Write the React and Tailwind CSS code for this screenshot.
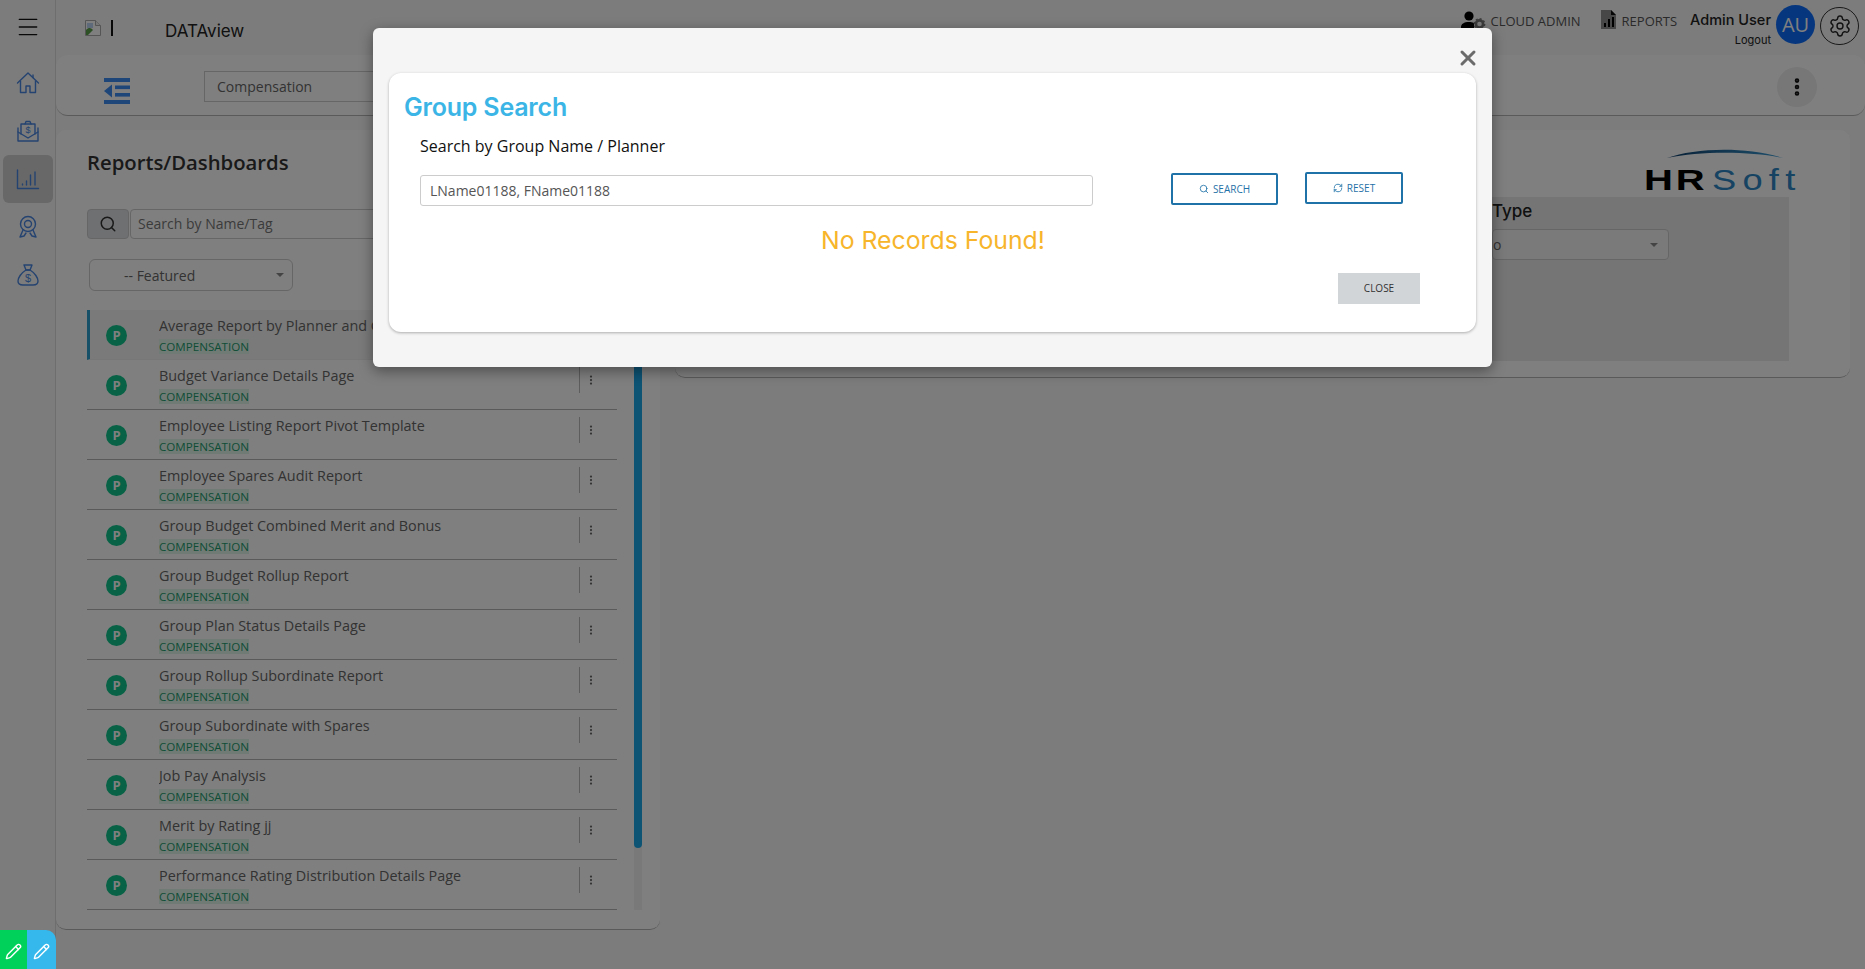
import React from 'react';
import { Search, RefreshCw, X, Menu, EllipsisVertical, Pencil, Settings } from 'lucide-react';

const reports = [
  'Average Report by Planner and Group',
  'Budget Variance Details Page',
  'Employee Listing Report Pivot Template',
  'Employee Spares Audit Report',
  'Group Budget Combined Merit and Bonus',
  'Group Budget Rollup Report',
  'Group Plan Status Details Page',
  'Group Rollup Subordinate Report',
  'Group Subordinate with Spares',
  'Job Pay Analysis',
  'Merit by Rating jj',
  'Performance Rating Distribution Details Page',
];

const iconProps = { width: 24, height: 24, viewBox: '0 0 24 24', fill: 'none', stroke: '#4a86e0', strokeWidth: 1.4, strokeLinejoin: 'round', strokeLinecap: 'round' };

function HomeIcon() {
  return (
    <svg {...iconProps}>
      <path d="M1.5 12 12 2l10.5 10" />
      <path d="M4.5 10v11.5h5.5V15h4v6.5h5.5V10" />
      <path d="M17 4v2.5" />
    </svg>
  );
}

function EnvelopeIcon() {
  return (
    <svg {...iconProps}>
      <path d="M2 9v13h20V9" />
      <path d="M2 13l10 6 10-6" />
      <path d="M5 15V5h14v10" />
      <path d="M9 5 10 2.5h4L15 5" />
      <text x="12" y="14" fontSize="9" textAnchor="middle" fill="#4a86e0" stroke="none" fontFamily="Liberation Sans, sans-serif">$</text>
    </svg>
  );
}

function ChartIcon() {
  return (
    <svg {...iconProps}>
      <path d="M1.5 3v18.5h21" />
      <path d="M6.5 17v1" />
      <path d="M10.5 14v4" strokeDasharray="1.5 1" />
      <path d="M14.5 8v10" />
      <path d="M19 5v13" />
    </svg>
  );
}

function RibbonIcon() {
  return (
    <svg {...iconProps}>
      <circle cx="12" cy="9" r="7.5" />
      <circle cx="12" cy="9" r="3.5" />
      <path d="M7 15 4 22l4-1 2-3" />
      <path d="M17 15l3 7-4-1-2-3" />
    </svg>
  );
}

function BagIcon() {
  return (
    <svg {...iconProps}>
      <path d="M8 2h8l-2 5h-4z" />
      <path d="M10 7h4c5 3 8 8 8 11 0 3-2 4-5 4H7c-3 0-5-1-5-4 0-3 3-8 8-11z" />
      <text x="12" y="19" fontSize="11" textAnchor="middle" fill="#4a86e0" stroke="none" fontFamily="Liberation Sans, sans-serif">$</text>
    </svg>
  );
}

function OutdentIcon() {
  return (
    <svg width="26" height="26" viewBox="0 0 26 26" fill="#3f8cf0">
      <rect x="0" y="0" width="26" height="4" />
      <rect x="0" y="22" width="26" height="4" />
      <rect x="11" y="7.5" width="15" height="3.6" />
      <rect x="11" y="15" width="15" height="3.6" />
      <path d="M8 6.5v13L0 13z" />
    </svg>
  );
}

function BrokenImage() {
  return (
    <svg width="16" height="16" viewBox="0 0 16 16">
      <path d="M.5.5h10l5 5v10H.5z" fill="#fff" stroke="#aaa" />
      <path d="M10.5.5v5h5" fill="#eee" stroke="#aaa" />
      <path d="M1 15V10c3-3 5-2 7 0l-5 5z" fill="#5aa04a" />
      <path d="M2 3h6v5H2z" fill="#bcd4f4" />
    </svg>
  );
}

function UserCog() {
  return (
    <svg width="25" height="20" viewBox="0 0 25 20">
      <circle cx="8" cy="5" r="4.6" fill="#000" />
      <path d="M0 20v-4c0-3 3-5 8-5 2 0 3 .3 5 1v8z" fill="#000" />
      <circle cx="18.5" cy="13" r="3.6" fill="none" stroke="#777" strokeWidth="2.6" />
      <circle cx="18.5" cy="13" r="5.2" fill="none" stroke="#777" strokeWidth="1.4" strokeDasharray="2 2" />
    </svg>
  );
}

function ReportDoc() {
  return (
    <svg width="15" height="19" viewBox="0 0 15 19">
      <path d="M0 0h10l5 5v14H0z" fill="#8f8f8f" />
      <path d="M10 0l5 5h-5z" fill="#111" />
      <rect x="3" y="13" width="2" height="4" fill="#000" />
      <rect x="7" y="9" width="2" height="8" fill="#000" />
      <rect x="11" y="7" width="2" height="10" fill="#000" />
    </svg>
  );
}

function ReportRow({ title, active }) {
  return (
    <div className={`h-[50px] flex items-start border-b border-[#b5b5b5] ${active ? 'bg-[#f4f4f4] border-l-[3px] border-l-[#2a9fd0] border-b-[#eee]' : ''}`}>
      <div className={`flex-none mt-[15px] w-[21px] h-[21px] rounded-full bg-[#0ec48c] text-white text-[13px] font-bold flex items-center justify-center ${active ? 'ml-[16px]' : 'ml-[19px]'}`}>P</div>
      <div className="flex-1 min-w-0 ml-[32px] pt-[6px]">
        <div className="text-[14.4px] leading-[20px] text-[#666] truncate">{title}</div>
        <div className="mt-[4px] text-[11.6px] leading-[14px] text-[#1b9c6c]"><span className="bg-[#e3f6ec]">COMPENSATION</span></div>
      </div>
      <div className="flex-none mt-[7px] h-[26px] w-[38px] border-l border-[#bbb] flex items-center pl-[5px]">
        <EllipsisVertical size={12} strokeWidth={2.5} className="text-[#666]" />
      </div>
    </div>
  );
}

export default function App() {
  return (
    <div className="relative flex h-screen overflow-hidden bg-[#f8f8f8] font-['Open_Sans',sans-serif]">
      {/* sidebar */}
      <div className="flex-none w-[56px] border-r border-[#ddd] flex flex-col items-center pt-[14px]">
        <Menu size={26} strokeWidth={1.3} className="text-[#111]" />
        <div className="mt-[19px] flex flex-col items-center w-full">
          <div className="h-[48px] flex items-center justify-center"><HomeIcon /></div>
          <div className="h-[48px] flex items-center justify-center"><EnvelopeIcon /></div>
          <div className="h-[48px] w-[50px] rounded-[6px] bg-[#d0d0d0] flex items-center justify-center"><ChartIcon /></div>
          <div className="h-[48px] flex items-center justify-center"><RibbonIcon /></div>
          <div className="h-[48px] flex items-center justify-center"><BagIcon /></div>
        </div>
      </div>

      <div className="flex-1 min-w-0 flex flex-col">
        {/* top bar */}
        <div className="flex-none h-[55px] flex items-start">
          <div className="ml-[29px] mt-[20px] flex items-center">
            <BrokenImage />
            <div className="ml-[10px] w-[2px] h-[16px] bg-[#111]" />
          </div>
          <div className="ml-[52px] mt-[20px] text-[17px] leading-[22px] text-[#222] font-['Inter',sans-serif]">DATAview</div>
          <div className="ml-auto flex items-start">
            <div className="mt-[11px]"><UserCog /></div>
            <div className="ml-[4px] mt-[12px] text-[13px] leading-[18px] text-[#555]">CLOUD ADMIN</div>
            <div className="ml-[20px] mt-[10px]"><ReportDoc /></div>
            <div className="ml-[6px] mt-[12px] text-[13px] leading-[18px] text-[#555]">REPORTS</div>
            <div className="ml-[13px] mt-[11px] flex flex-col items-end">
              <div className="text-[14.5px] leading-[18px] font-medium text-[#222] font-['Inter',sans-serif]">Admin User</div>
              <div className="mt-[4px] text-[11px] leading-[14px] text-[#222] font-['Inter',sans-serif]">Logout</div>
            </div>
            <div className="ml-[5px] mt-[5px] w-[39px] h-[39px] rounded-full bg-[#0d6efd] text-white text-[20px] flex items-center justify-center">AU</div>
            <div className="ml-[5px] mr-[6px] mt-[7px] w-[39px] h-[38px] rounded-full border border-[#333] flex items-center justify-center">
              <Settings size={24} strokeWidth={1.4} className="text-[#222]" />
            </div>
          </div>
        </div>

        {/* toolbar */}
        <div className="flex-none h-[61px] bg-white rounded-[12px] border-b border-[#b5b5b5] flex items-center">
          <div className="ml-[48px] mt-[11px]"><OutdentIcon /></div>
          <div className="ml-[74px] mt-[2px] w-[300px] h-[31px] border border-[#ccc] pl-[12px] text-[14px] leading-[29px] text-[#666]">Compensation</div>
          <div className="ml-auto mr-[48px] mt-[3px] w-[40px] h-[40px] rounded-full bg-[#eee] flex items-center justify-center">
            <EllipsisVertical size={22} strokeWidth={3} className="text-[#111]" />
          </div>
        </div>

        {/* panels */}
        <div className="flex-1 min-h-0 flex items-start mt-[14px] pr-[15px] gap-[15px]">
          <div className="flex-none w-[604px] h-[800px] bg-white rounded-[10px] border-b border-[#b5b5b5] pl-[31px] flex flex-col">
            <div className="mt-[18px] text-[20.3px] leading-[28px] font-semibold text-[#333]">Reports/Dashboards</div>
            <div className="mt-[33px] flex w-[530px]">
              <div className="w-[42px] h-[30px] rounded-[4px] bg-[#dde1e5] border border-[#ccc] flex items-center justify-center">
                <Search size={18} className="text-[#333]" />
              </div>
              <div className="flex-1 h-[30px] ml-[1px] rounded-[4px] border border-[#ccc] pl-[7px] text-[14px] leading-[28px] text-[#777]">Search by Name/Tag</div>
            </div>
            <div className="mt-[20px] ml-[2px] w-[204px] h-[32px] rounded-[6px] border border-[#ccc] pl-[34px] pr-[8px] flex items-center justify-between text-[14px] text-[#666]">
              <span>-- Featured</span>
              <span className="w-0 h-0 border-x-[4px] border-x-transparent border-t-[4px] border-t-[#888]" />
            </div>
            <div className="mt-[19px] flex">
              <div className="flex-none w-[530px]">
                {reports.map((r, i) => <ReportRow key={r} title={r} active={i === 0} />)}
              </div>
              <div className="flex-none ml-[17px] w-[8px] h-[600px] bg-[#f2f2f2]">
                <div className="w-[8px] h-[538px] rounded-b-[4px] bg-[#1aa7e8]" />
              </div>
            </div>
          </div>

          <div className="flex-1 min-w-0 h-[248px] bg-white rounded-[10px] border-b border-[#b5b5b5] relative flex flex-col items-end">
            <div className="mr-[45px] mt-[17px] w-[161px] h-[49px] flex flex-col items-center">
              <svg width="120" height="14" viewBox="0 0 120 14" className="flex-none">
                <defs>
                  <linearGradient id="arc" x1="0" x2="1" y1="0" y2="0">
                    <stop offset="0" stopColor="#0d3d6a" />
                    <stop offset="1" stopColor="#3d9fd8" />
                  </linearGradient>
                </defs>
                <path d="M2 11C30 1 80-1 118 11 85 4 35 4 2 11z" fill="url(#arc)" />
              </svg>
              <div className="w-full flex text-[29px] leading-[38px] font-['Liberation_Sans',sans-serif] whitespace-nowrap">
                <span className="inline-block flex-none w-[68px] origin-left scale-x-[1.38] font-bold text-black tracking-[2px]">HR</span>
                <span className="inline-block flex-none origin-left scale-x-[1.25] text-[#2c86c5] tracking-[5px]">Soft</span>
              </div>
            </div>
            <div className="mr-[61px] mt-[1px] w-[298px] h-[164px] bg-[#eaeaea] flex flex-col items-start pl-[1px]">
              <div className="mt-[2px] text-[17px] leading-[24px] font-medium text-[#222] font-['Inter',sans-serif]">Type</div>
              <div className="mt-[6px] w-[177px] h-[31px] rounded-[4px] border border-[#ccc] bg-[#f5f5f5] flex items-center justify-between pr-[10px] text-[14px] text-[#666]">
                <span>o</span>
                <span className="w-0 h-0 border-x-[4px] border-x-transparent border-t-[4px] border-t-[#888]" />
              </div>
            </div>
          </div>
        </div>
      </div>

      {/* modal backdrop */}
      <div className="absolute inset-0 z-10 bg-black/50" />
      <div className="absolute z-20 left-[373px] top-[28px] w-[1119px] h-[339px] bg-[#f5f5f5] rounded-[6px] shadow-[0_4px_14px_rgba(0,0,0,0.4)] px-[16px] pt-[45px]">
        <button className="absolute right-[12px] top-[18px] text-[#6b6b6b]"><X size={24} strokeWidth={3} /></button>
        <div className="h-[259px] w-[1087px] bg-white rounded-[12px] shadow-[0_1px_3px_rgba(0,0,0,0.3)] pl-[15px] pt-[17px]">
          <div className="text-[25px] leading-[34px] font-semibold tracking-[-0.2px] text-[#3bb5e6] font-['Inter',sans-serif]">Group Search</div>
          <div className="ml-[16px] mt-[11px] text-[16px] leading-[22px] font-medium text-[#111]">Search by Group Name / Planner</div>
          <div className="ml-[16px] mt-[18px] flex items-start">
            <div className="w-[673px] h-[31px] rounded-[3px] border border-[#ccc] pl-[9px] text-[14px] leading-[29px] text-[#555]">LName01188, FName01188</div>
            <button className="ml-[78px] -mt-[2px] w-[107px] h-[32px] rounded-[2px] border-2 border-[#1f72a8] flex items-center justify-center gap-[4px] text-[10px] text-[#1f72a8]">
              <Search size={10} /> SEARCH
            </button>
            <button className="ml-[27px] -mt-[3px] w-[98px] h-[32px] rounded-[2px] border-2 border-[#1f72a8] flex items-center justify-center gap-[4px] text-[10px] text-[#1f72a8]">
              <RefreshCw size={10} /> RESET
            </button>
          </div>
          <div className="mt-[17px] ml-[417px] text-[24.8px] leading-[34px] text-[#f7b52c] font-['Inter',sans-serif]">No Records Found!</div>
          <div className="mt-[16px] ml-[934px] w-[82px] h-[31px] bg-[#d2d5d8] flex items-center justify-center text-[10px] text-[#333]">CLOSE</div>
        </div>
      </div>

      {/* feedback buttons sit above the backdrop */}
      <div className="absolute z-20 left-0 bottom-0 flex h-[39px]">
        <div className="w-[27px] pt-[4px] bg-[#00d15a] flex items-center justify-center text-white"><Pencil size={17} /></div>
        <div className="w-[29px] pt-[4px] bg-[#35b8ec] rounded-tr-[10px] flex items-center justify-center text-white"><Pencil size={17} /></div>
      </div>
    </div>
  );
}
